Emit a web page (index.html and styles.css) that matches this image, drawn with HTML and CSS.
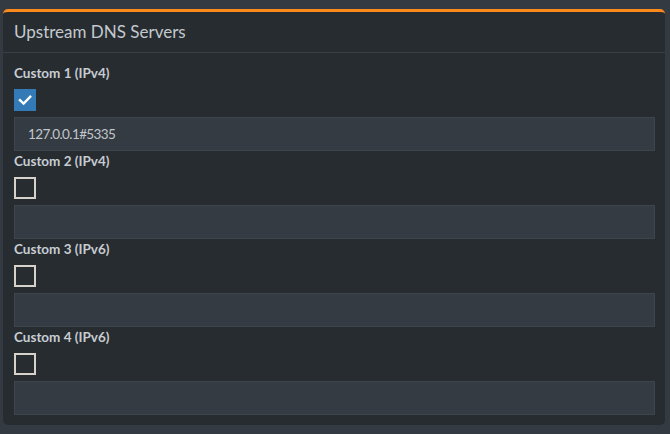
FILE: index.html
```html
<!DOCTYPE html>
<html>
<head>
<meta charset="utf-8">
<link rel="stylesheet" href="styles.css">
</head>
<body>
<div class="page">
  <div class="box">
    <div class="box-header">
      <h3 class="box-title">Upstream DNS Servers</h3>
    </div>
    <div class="box-body">
      <div class="group">
        <label class="label">Custom 1 (IPv4)</label>
        <span class="check checked">
          <svg viewBox="0 0 22 22" width="22" height="22"><path d="M6 11.2 L9.6 14.6 L16.2 7.8" fill="none" stroke="#fff" stroke-width="2.4" stroke-linecap="square"/></svg>
        </span>
        <div class="input">127.0.0.1#5335</div>
      </div>
      <div class="group">
        <label class="label">Custom 2 (IPv4)</label>
        <span class="check"></span>
        <div class="input"></div>
      </div>
      <div class="group">
        <label class="label">Custom 3 (IPv6)</label>
        <span class="check"></span>
        <div class="input"></div>
      </div>
      <div class="group">
        <label class="label">Custom 4 (IPv6)</label>
        <span class="check"></span>
        <div class="input"></div>
      </div>
    </div>
  </div>
</div>
</body>
</html>
```
FILE: styles.css
```css
html, body {
  margin: 0;
  padding: 0;
  background: #343a41;
  font-family: Lato, "Open Sans", sans-serif;
}
.page {
  width: 670px;
  height: 434px;
  box-sizing: border-box;
  padding: 9px 5px 0 3px;
}
.box {
  background: #272c30;
  border-top: 3px solid #fb891c;
  border-radius: 5px;
  height: 416px;
  box-sizing: border-box;
}
.box-header {
  border-bottom: 1px solid #393f45;
  display: flex;
  align-items: center;
  padding: 0 11px;
  box-sizing: border-box;
  height: 41px;
}
.box-title {
  margin: 0;
  font-weight: normal;
  font-size: 17px;
  color: #c3c9ce;
  padding-bottom: 2px;
}
.box-body {
  padding: 10px 10px 10px 11px;
  display: flex;
  flex-direction: column;
}
.group {
  display: flex;
  flex-direction: column;
  align-items: flex-start;
}
.label {
  font-size: 13.5px;
  font-weight: bold;
  color: #c7cdd2;
  height: 21px;
  line-height: 21px;
  margin-bottom: 5px;
}
.check {
  width: 22px;
  height: 22px;
  box-sizing: border-box;
  border: 2px solid #d6d1cb;
  display: block;
}
.check.checked {
  background: #337ab7;
  border: none;
}
.check svg { display: block; }
.input {
  margin-top: 6px;
  width: 641px;
  height: 34px;
  box-sizing: border-box;
  background: #353b42;
  border: 1px solid #3f454c;
  font-size: 13.5px;
  letter-spacing: -0.6px;
  color: #c0c6cb;
  line-height: 32px;
  padding: 0 13px;
}
```
